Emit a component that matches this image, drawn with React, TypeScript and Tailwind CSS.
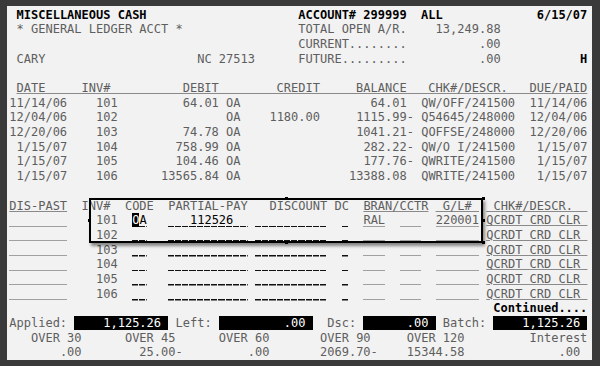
type Kind = 'g' | 'k' | 'u' | 'line' | 'dash' | 'inv' | 'cur';
type Seg = [number, string, Kind?, number?];

// lay out words at fixed columns, returns string starting at the first column
function lay(items: [number, string][]): string {
  let s = '';
  const start = items[0][0];
  items.forEach(([c, t]) => {
    s = s.padEnd(c - start) + t;
  });
  return s;
}

const dash =
  'inline-block align-top h-[14px] text-black bg-[repeating-linear-gradient(90deg,#111_0px,#111_6.2px,transparent_6.2px,transparent_7.224px)] bg-bottom bg-no-repeat bg-[length:100%_1.5px]';

function Piece({ k, t }: { k: Kind; t: string }) {
  if (k === 'k') return <span className="text-black font-bold">{t}</span>;
  if (k === 'u')
    return (
      <span className="underline decoration-[#8a8a8a] decoration-1 underline-offset-[1px]">{t}</span>
    );
  if (k === 'line')
    return <span className="inline-block align-top h-[13.5px] border-b border-[#a0a0a0]">{t}</span>;
  if (k === 'dash') return <span className={dash}>{t}</span>;
  if (k === 'inv') return <span className="inline-block align-top h-[14px] bg-black text-white">{t}</span>;
  if (k === 'cur')
    return (
      <span className={dash}>
        <span className="bg-black text-white">O</span>A
      </span>
    );
  return <span>{t}</span>;
}

function Row({ segs }: { segs: Seg[] }) {
  let col = 0;
  const out: React.ReactNode[] = [];
  segs.forEach(([c, t, k = 'g', n], i) => {
    const len = n ?? t.length;
    if (c > col) out.push(' '.repeat(c - col));
    out.push(<Piece key={i} k={k} t={t.padEnd(len)} />);
    col = c + len;
  });
  return <div className="h-[14.7px] whitespace-pre">{out}</div>;
}

const fieldRow = (inv: string): Seg[] => [
  [0, '', 'line', 8],
  [12, inv],
  [17, '', 'dash', 2],
  [22, '', 'dash', 11],
  [34, '', 'dash', 10],
  [46, '', 'dash', 1],
  [49, '', 'line', 3],
  [54, '', 'line', 3],
  [59, '', 'line', 6],
  [66, 'QCRDT CRD CLR ', 'u'],
];

const rows: Seg[][] = [
  [
    [1, 'MISCELLANEOUS CASH', 'k'],
    [40, 'ACCOUNT# 299999  ALL', 'k'],
    [73, '6/15/07', 'k'],
  ],
  [
    [1, '* GENERAL LEDGER ACCT *'],
    [40, 'TOTAL OPEN A/R.'],
    [59, '13,249.88'],
  ],
  [
    [40, 'CURRENT........'],
    [65, '.00'],
  ],
  [
    [1, 'CARY'],
    [26, 'NC 27513'],
    [40, 'FUTURE.........'],
    [65, '.00'],
    [79, 'H', 'k'],
  ],
  [],
  [
    [
      1,
      lay([
        [1, 'DATE'],
        [10, 'INV#'],
        [24, 'DEBIT'],
        [37, 'CREDIT'],
        [48, 'BALANCE'],
        [58, 'CHK#/DESCR.'],
        [72, 'DUE/PAID'],
      ]),
      'u',
    ],
  ],
  [[0, '11/14/06'], [12, '101'], [24, '64.01'], [30, 'OA'], [50, '64.01'], [57, 'QW/OFF/241500'], [72, '11/14/06']],
  [[0, '12/04/06'], [12, '102'], [30, 'OA'], [36, '1180.00'], [48, '1115.99-'], [57, 'Q54645/248000'], [72, '12/04/06']],
  [[0, '12/20/06'], [12, '103'], [24, '74.78'], [30, 'OA'], [48, '1041.21-'], [57, 'QOFFSE/248000'], [72, '12/20/06']],
  [[1, '1/15/07'], [12, '104'], [23, '758.99'], [30, 'OA'], [49, '282.22-'], [57, 'QW/O I/241500'], [73, '1/15/07']],
  [[1, '1/15/07'], [12, '105'], [23, '104.46'], [30, 'OA'], [49, '177.76-'], [57, 'QWRITE/241500'], [73, '1/15/07']],
  [[1, '1/15/07'], [12, '106'], [21, '13565.84'], [30, 'OA'], [47, '13388.08'], [57, 'QWRITE/241500'], [73, '1/15/07']],
  [],
  [
    [0, 'DIS-PAST', 'u'],
    [10, 'INV#'],
    [16, 'CODE'],
    [22, 'PARTIAL-PAY'],
    [36, 'DISCOUNT'],
    [45, 'DC'],
    [49, 'BRAN/CCTR', 'u'],
    [59, ' G/L# ', 'u'],
    [66, ' CHK#/DESCR.  ', 'u'],
  ],
  [
    [0, '', 'line', 8],
    [12, '101'],
    [17, 'OA', 'cur'],
    [22, '   112526', 'dash', 11],
    [34, '', 'dash', 10],
    [46, '', 'dash', 1],
    [49, 'RAL', 'line'],
    [54, '', 'line', 3],
    [59, '220001', 'line'],
    [66, 'QCRDT CRD CLR ', 'u'],
  ],
  fieldRow('102'),
  fieldRow('103'),
  fieldRow('104'),
  fieldRow('105'),
  fieldRow('106'),
  [[67, 'Continued....', 'k']],
  [
    [0, 'Applied:'],
    [9, '    1,125.26 ', 'inv'],
    [23, 'Left:'],
    [29, '         .00 ', 'inv'],
    [44, 'Dsc:'],
    [49, '      .00 ', 'inv'],
    [60, 'Batch:'],
    [67, '    1,125.26 ', 'inv'],
  ],
  [
    [3, 'OVER 30'],
    [16, 'OVER 45'],
    [29, 'OVER 60'],
    [43, 'OVER 90'],
    [55, 'OVER 120'],
    [72, 'Interest'],
  ],
  [
    [7, '.00'],
    [18, '25.00-'],
    [33, '.00'],
    [43, '2069.70-'],
    [55, '15344.58'],
    [76, '.00'],
  ],
];

const dot = 'w-[3px] h-[3px] bg-black';

export default function App() {
  return (
    <div className="w-[600px] h-[366px] bg-[#3a3a3a] pt-[6px] pl-[7px] pr-[8px] pb-[6px]">
      <div className="relative h-full bg-[#f2f2f2] pt-[1.6px] pl-[2.3px] font-['DejaVu_Sans_Mono','Liberation_Mono',monospace] text-[12px] leading-[14.7px] text-[#5e5e5e]">
        {rows.map((r, i) => (
          <Row key={i} segs={r} />
        ))}

        {/* popup window over the payment lines, with its sizing handles */}
        <div className="absolute left-[82px] top-[192px] w-[394px] h-[45px] border-2 border-black shadow-[2px_3px_3px_rgba(0,0,0,0.45)] pointer-events-none">
          <div className="absolute -inset-[3px] -right-[4px] flex justify-between">
            <div className="flex flex-col justify-center">
              <div className={dot} />
            </div>
            <div className="flex flex-col justify-between">
              <div className={dot} />
              <div className={dot} />
            </div>
            <div className="flex flex-col justify-between">
              <div className={dot} />
              <div className={dot} />
              <div className={dot} />
            </div>
          </div>
        </div>
      </div>
    </div>
  );
}
